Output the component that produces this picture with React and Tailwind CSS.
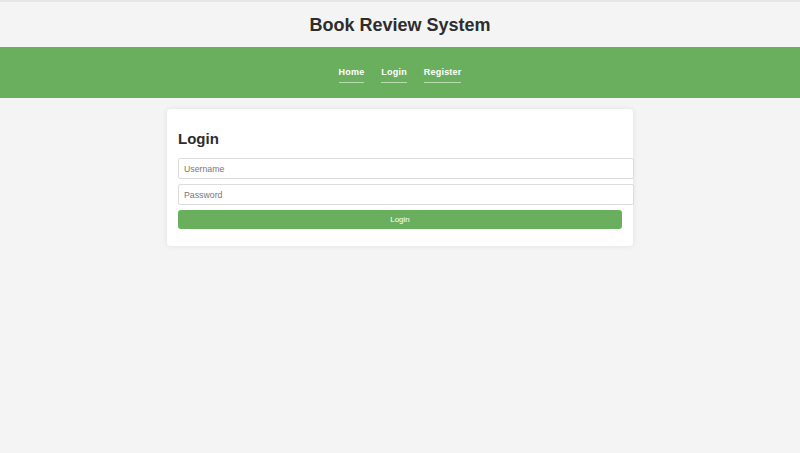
import React from "react";

export default function App() {
  const links = ["Home", "Login", "Register"];

  return (
    <div className="min-h-[453px] bg-[#f4f4f4] font-['Liberation_Sans',Arial,sans-serif] text-[#2d2d2d]">
      <header className="border-t-2 border-[#e6e6e6] bg-[#f4f4f4] h-[47px] flex items-center justify-center">
        <h1 className="text-[18px] font-bold leading-none">Book Review System</h1>
      </header>

      <nav className="bg-[#6aaf5e] h-[51px] flex items-center justify-center gap-[17px]">
        {links.map((link) => (
          <a
            key={link}
            href="#"
            className="text-white text-[9px] font-bold tracking-[0.2px] pb-[4px] border-b border-[#b8dcb0] leading-[12px] mt-[4px]"
          >
            {link}
          </a>
        ))}
      </nav>

      <main className="flex justify-center pt-[11px]">
        <div className="w-[466px] bg-white rounded-[4px] shadow-[0_0_6px_rgba(0,0,0,0.08)] px-[11px] pt-[22px] pb-[17px]">
          <h2 className="text-[15px] font-bold leading-none mb-[12px]">Login</h2>
          <form className="flex flex-col" onSubmit={(e) => e.preventDefault()}>
            <input
              type="text"
              placeholder="Username"
              className="box-content w-full h-[19px] px-[5px] border border-[#dcdcdc] rounded-[2px] text-[8.75px] placeholder:text-[#777] mb-[5px] outline-none"
            />
            <input
              type="password"
              placeholder="Password"
              className="box-content w-full h-[19px] px-[5px] border border-[#dcdcdc] rounded-[2px] text-[8.75px] placeholder:text-[#777] mb-[5px] outline-none"
            />
            <button
              type="submit"
              className="w-full h-[19px] bg-[#6aaf5e] text-white text-[8px] rounded-[3px]"
            >
              Login
            </button>
          </form>
        </div>
      </main>
    </div>
  );
}
